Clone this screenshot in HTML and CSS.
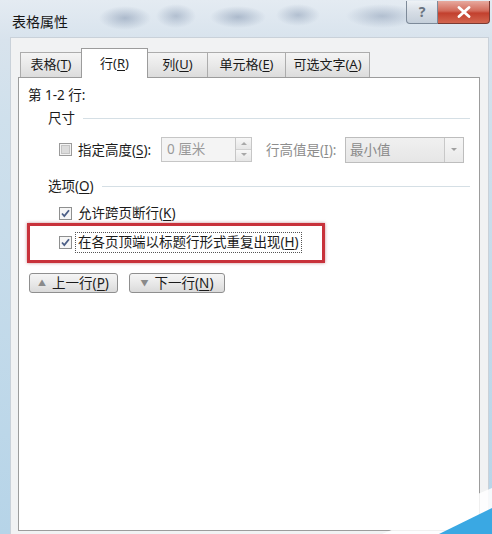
FILE: index.html
```html
<!DOCTYPE html>
<html lang="zh-CN">
<head>
    <meta charset="UTF-8">
    <title>表格属性</title>
    <link rel="stylesheet" href="styles.css">
</head>
<body>
    <div class="window">
        <div class="titlebar">
            <span class="title">表格属性</span>
            <div class="caption-buttons">
                <span class="btn-help">?</span>
                <span class="btn-close">
                    <svg width="14" height="12" viewBox="0 0 14 12">
                        <path d="M2 1.5 L12 10.5 M12 1.5 L2 10.5" stroke="#ffffff" stroke-width="2.8" stroke-linecap="round"/>
                    </svg>
                </span>
            </div>
        </div>

        <div class="client">
            <div class="tabs">
                <div class="tab tab-table">表格(<u>T</u>)</div>
                <div class="tab tab-row active">行(<u>R</u>)</div>
                <div class="tab tab-col">列(<u>U</u>)</div>
                <div class="tab tab-cell">单元格(<u>E</u>)</div>
                <div class="tab tab-alt">可选文字(<u>A</u>)</div>
            </div>

            <div class="panel">
                <div class="panel-title">第 1-2 行:</div>

                <div class="group-head"><span>尺寸</span><i class="rule"></i></div>

                <div class="row row-size">
                    <svg class="check" width="13" height="13" viewBox="0 0 13 13">
                        <rect x="0.5" y="0.5" width="12" height="12" fill="#f4f4f4" stroke="#9a9a9a"/>
                        <rect x="2.5" y="2.5" width="8" height="8" fill="#dcdcdc" stroke="#c4c4c4"/>
                    </svg>
                    <span class="label label-height">指定高度(<u>S</u>):</span>
                    <span class="input">0 厘米</span>
                    <span class="spinner">
                        <span class="spin-up"></span>
                        <span class="spin-down"></span>
                    </span>
                    <span class="label label-rule disabled">行高值是(<u>I</u>):</span>
                    <span class="select">
                        <span class="select-text">最小值</span>
                        <span class="drop"></span>
                    </span>
                </div>

                <div class="group-head group-options"><span>选项(<u>O</u>)</span><i class="rule"></i></div>

                <div class="row row-check">
                    <svg class="check" width="13" height="13" viewBox="0 0 13 13">
                        <rect x="0.5" y="0.5" width="12" height="12" fill="#f6f6f6" stroke="#8e8f8f"/>
                        <path d="M3 6.5 L5.3 9 L10 3.2" fill="none" stroke="#4b5e86" stroke-width="1.8"/>
                    </svg>
                    <span class="label">允许跨页断行(<u>K</u>)</span>
                </div>

                <div class="highlight">
                    <div class="row row-check">
                        <svg class="check" width="13" height="13" viewBox="0 0 13 13">
                            <rect x="0.5" y="0.5" width="12" height="12" fill="#f6f6f6" stroke="#8e8f8f"/>
                            <path d="M3 6.5 L5.3 9 L10 3.2" fill="none" stroke="#4b5e86" stroke-width="1.8"/>
                        </svg>
                        <span class="label focused">在各页顶端以标题行形式重复出现(<u>H</u>)</span>
                    </div>
                </div>

                <div class="nav-buttons">
                    <span class="button btn-prev"><i class="arrow">▲</i>上一行(<u>P</u>)</span>
                    <span class="button btn-next"><i class="arrow">▼</i>下一行(<u>N</u>)</span>
                </div>
            </div>
        </div>

        <svg class="corner" width="110" height="50" viewBox="0 0 110 50">
            <polygon points="0,50 110,4 110,50" fill="#ffffff" opacity="0.85"/>
            <polygon points="57,50 110,24 110,50" fill="#3aa8e3"/>
        </svg>
    </div>
</body>
</html>
```

FILE: styles.css
```css
body {
    margin: 0;
    font-family: "Noto Sans", "Noto Sans CJK SC", sans-serif;
    font-size: 13.5px;
    color: #1b1b1b;
    background: #ffffff;
}
u {
    text-decoration: underline;
    text-underline-offset: 2px;
}
.window {
    position: relative;
    width: 492px;
    height: 534px;
    overflow: hidden;
    background:
        radial-gradient(ellipse 26px 12px at 125px 18px, rgba(110,130,160,0.45), transparent),
        radial-gradient(ellipse 20px 12px at 176px 16px, rgba(110,130,160,0.4), transparent),
        radial-gradient(ellipse 28px 11px at 238px 17px, rgba(110,130,160,0.45), transparent),
        radial-gradient(ellipse 22px 11px at 298px 15px, rgba(110,130,160,0.4), transparent),
        radial-gradient(ellipse 36px 12px at 382px 16px, rgba(110,130,160,0.4), transparent),
        linear-gradient(180deg, #e4ebf2 0%, #d8e3ed 40px, #cfe0ec 120px, #b6d4e8 534px);
}

/* title bar */
.titlebar {
    display: flex;
    align-items: flex-start;
    height: 37px;
}
.title {
    margin: 13px 0 0 12px;
    font-size: 14px;
    line-height: 18px;
    color: #151515;
}
.caption-buttons {
    display: flex;
    margin-left: auto;
    margin-right: 2px;
    margin-top: 1px;
}
.btn-help {
    width: 32px;
    height: 23px;
    box-sizing: border-box;
    border: 1px solid #7d8a99;
    border-top: none;
    border-radius: 0 0 0 4px;
    background: linear-gradient(180deg, #eef2f6 0%, #d6dde5 50%, #c5cfda 100%);
    color: #6a7480;
    font-size: 14px;
    font-weight: bold;
    line-height: 21px;
    text-align: center;
}
.btn-close {
    display: flex;
    align-items: center;
    justify-content: center;
    width: 52px;
    height: 23px;
    box-sizing: border-box;
    border: 1px solid #7a3a32;
    border-left: none;
    border-top: none;
    border-radius: 0 0 4px 0;
    background: linear-gradient(180deg, #e7a99e 0%, #d26a5a 45%, #c2402e 55%, #d3664f 100%);
}

/* client area */
.client {
    margin-left: 10px;
    width: 479px;
    height: 497px;
    box-sizing: border-box;
    border: 1px solid #c9d1d9;
    border-bottom: none;
    background: #f1f2f3;
    padding-top: 10px;
}
.tabs {
    display: flex;
    align-items: flex-end;
    height: 29px;
    padding-left: 9px;
}
.tab {
    box-sizing: border-box;
    height: 25px;
    border: 1px solid #acacac;
    border-bottom: none;
    margin-left: -1px;
    background: linear-gradient(180deg, #f4f4f4 0%, #e9e9e9 50%, #dcdcdc 100%);
    line-height: 23px;
    text-align: center;
    font-size: 13px;
}
.tab-table { width: 62px; margin-left: 0; }
.tab-row { width: 67px; }
.tab-col { width: 61px; }
.tab-cell { width: 79px; }
.tab-alt { width: 85px; }
.tab.active {
    position: relative;
    z-index: 1;
    height: 30px;
    margin-bottom: -1px;
    background: #ffffff;
    border-color: #9c9c9c;
    line-height: 28px;
}

.panel {
    margin-left: 7px;
    width: 462px;
    height: 454px;
    box-sizing: border-box;
    border: 1px solid #9c9c9c;
    background: #ffffff;
    padding: 0 9px;
}
.panel-title {
    margin-top: 8px;
    line-height: 18px;
}
.group-head {
    display: flex;
    align-items: center;
    margin: 5px 0 0 20px;
    line-height: 18px;
}
.group-head .rule {
    flex: 1;
    height: 1px;
    margin-left: 8px;
    background: #d5dfe5;
}
.group-options {
    margin-top: 15px;
}

/* rows */
.row {
    display: flex;
    align-items: center;
    margin-left: 31px;
}
.check {
    flex: none;
    display: block;
}
.label {
    margin-left: 6px;
    line-height: 18px;
    white-space: nowrap;
}
.disabled {
    color: #8d8d8d;
}
.row-size {
    margin-top: 10px;
    height: 25px;
}
.label-height {
    width: 83px;
}
.input {
    box-sizing: border-box;
    width: 74px;
    height: 25px;
    border: 1px solid #c6c6c6;
    border-right: none;
    background: #f4f4f4;
    color: #9a9a9a;
    padding-left: 5px;
    line-height: 23px;
}
.spinner {
    display: flex;
    flex-direction: column;
    box-sizing: border-box;
    width: 17px;
    height: 25px;
    border: 1px solid #c6c6c6;
    background: #f0f0f0;
}
.spin-up, .spin-down {
    flex: 1;
    position: relative;
    background: linear-gradient(180deg, #f7f7f7, #e6e6e6);
}
.spin-up { border-bottom: 1px solid #d0d0d0; }
.spin-up::after, .spin-down::after {
    content: "";
    position: absolute;
    left: 5px;
    top: 4px;
    border-left: 3px solid transparent;
    border-right: 3px solid transparent;
}
.spin-up::after { border-bottom: 3px solid #a8a8a8; }
.spin-down::after { border-top: 3px solid #a8a8a8; top: 3px; }
.label-rule {
    margin-left: 14px;
    width: 79px;
}
.select {
    display: flex;
    box-sizing: border-box;
    width: 119px;
    height: 26px;
    border: 1px solid #bdbdbd;
    background: linear-gradient(180deg, #f0f0f0, #e6e6e6);
    color: #8a8a8a;
}
.select-text {
    flex: 1;
    padding-left: 4px;
    line-height: 24px;
}
.drop {
    position: relative;
    width: 18px;
    border-left: 1px solid #c8c8c8;
    background: linear-gradient(180deg, #f6f6f6, #e9e9e9);
}
.drop::after {
    content: "";
    position: absolute;
    left: 6px;
    top: 10px;
    border-left: 3px solid transparent;
    border-right: 3px solid transparent;
    border-top: 3px solid #a0a0a0;
}
.row-check {
    margin-top: 8px;
    height: 20px;
}

.highlight {
    box-sizing: border-box;
    width: 298px;
    height: 40px;
    margin-left: -1px;
    border: 3px solid #c8323b;
    box-shadow: 0 0 3px rgba(150, 30, 40, 0.5);
    padding-top: 6px;
}
.highlight .row {
    margin-top: 0;
    margin-left: 29px;
}
.focused {
    margin-left: 4px;
    padding: 0 2px;
    outline: 1px dotted #555555;
    line-height: 19px;
}

.nav-buttons {
    display: flex;
    gap: 11px;
    margin-top: 10px;
    margin-left: 1px;
}
.button {
    box-sizing: border-box;
    height: 20px;
    border: 1px solid #8f8f8f;
    border-radius: 3px;
    background: linear-gradient(180deg, #f5f5f5 0%, #e9e9e9 50%, #dadada 100%);
    line-height: 18px;
    text-align: center;
}
.btn-prev { width: 89px; }
.btn-next { width: 96px; }
.arrow {
    font-style: normal;
    font-size: 8px;
    color: #8a8a8a;
    margin-right: 6px;
    vertical-align: 2px;
}

.corner {
    position: absolute;
    right: 0;
    bottom: 0;
}
```
